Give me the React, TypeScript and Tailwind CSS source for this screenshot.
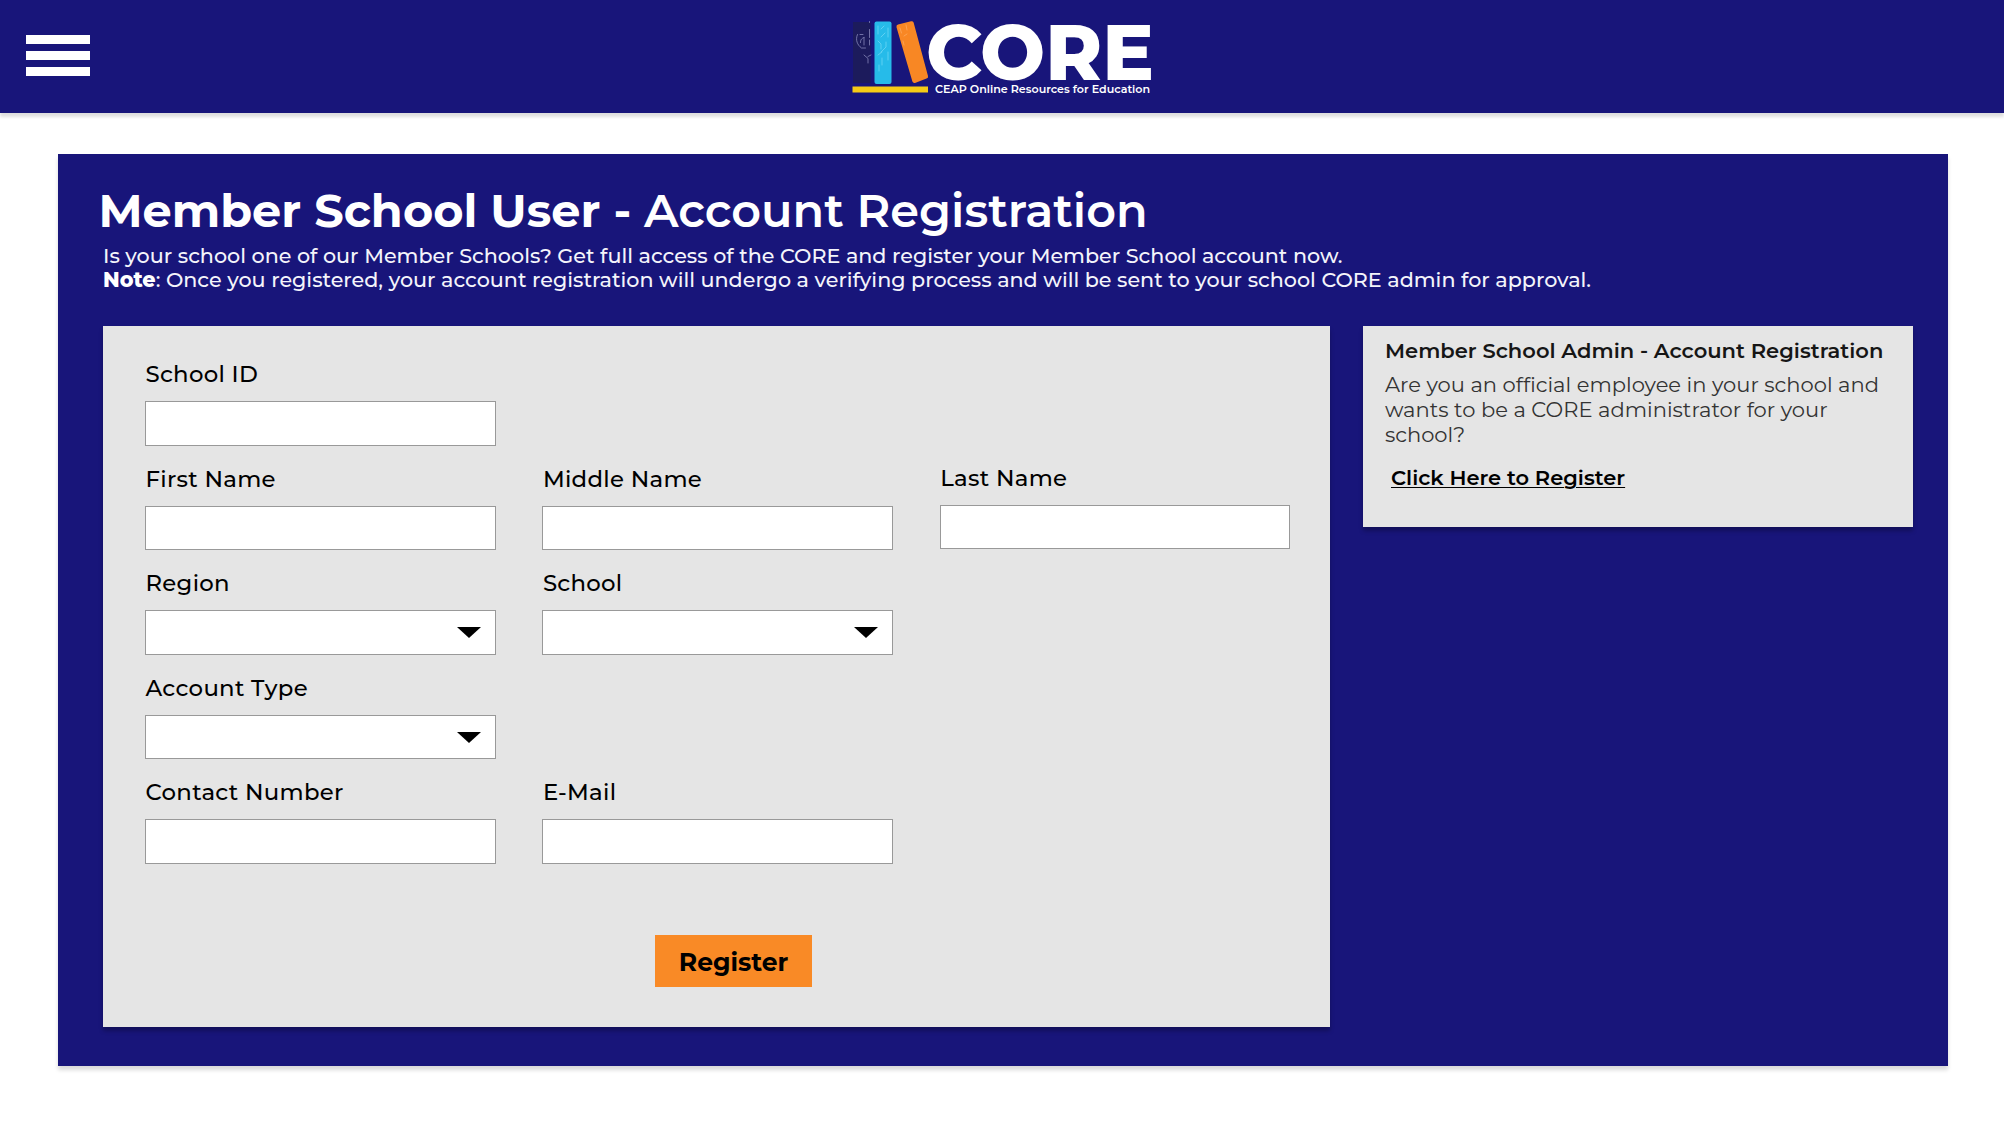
type FieldProps = {
  label: string;
  select?: boolean;
  className?: string;
};

function Field({ label, select = false, className = '' }: FieldProps) {
  return (
    <div className={`flex flex-col gap-[15px] ${className}`}>
      <label className="pt-px pl-[0.5px] text-[22.8px] leading-6 font-medium tracking-[0.3px] whitespace-nowrap text-black">
        {label}
      </label>
      <div className="flex h-[44.6px] items-center justify-end border border-[#999] bg-white pr-[14px]">
        {select && (
          <svg width="24" height="11" viewBox="0 0 24 11">
            <path d="M0 0h24L12 11z" fill="#000" />
          </svg>
        )}
      </div>
    </div>
  );
}

function BooksLogo() {
  return (
    <svg width="80" height="76" viewBox="0 0 80 76" fill="none">
      <rect x="1" y="2" width="17.5" height="61" fill="#1c1b5c" />
      <g stroke="#8d8fc0" strokeWidth="1" strokeLinecap="round" strokeLinejoin="round" opacity=".75">
        <path d="M5.500 14.500C3 20 5.500 25 9.500 28h4M8 14.500h3M12 17.500c-3 1-3.500 3-3.500 5M12 17.500V25M17.500 9.500v8M17.500 20v5M17.500 1.500v1M12 35l4 3.500V43M16 36.500l3-1.500" />
      </g>
      <rect x="22.500" y="1.500" width="17" height="62.500" rx="2" fill="#26bbe9" />
      <g stroke="#8fe3fa" strokeWidth="0.9" strokeLinecap="round" opacity=".6">
        <path d="M26 6v8M29 9l3-3M36 8v9M33 13l-4 4M26 21l3 3v5M34 22v5l-5 5M26 35l4-3M36 32v8M30 38v7M27 45v6" />
      </g>
      <path d="M46 4.500 59 1.200q2-.4 2.600 1.400L76 56q.500 2-1.500 2.600L63 63q-2 .4-2.600-1.400L44.500 7.200Q44 5.100 46 4.500z" fill="#f88724" />
      <g stroke="#ffb877" strokeWidth="0.9" strokeLinecap="round" opacity=".6">
        <path d="m48 8 1.500 5M54 5l1 5M52 16l3-2M51 21l1 4" />
      </g>
      <rect x="0.500" y="66.500" width="75.500" height="6" fill="#f5cb16" />
    </svg>
  );
}

function Header() {
  return (
    <header className="flex h-[112.6px] items-start bg-[#18157a] shadow-[0_4px_3px_rgba(0,0,0,0.13)]">
      <button aria-label="Menu" className="mt-[34.5px] ml-[26px] flex w-[63.5px] flex-col gap-[7.3px]">
        <span className="h-[9px] bg-white" />
        <span className="h-[9px] bg-white" />
        <span className="h-[9px] bg-white" />
      </button>
      <div className="mt-5 ml-[762.5px] flex">
        <BooksLogo />
        <div className="-ml-[6px] whitespace-nowrap text-white">
          <div className="mt-[5px] text-[77px] leading-[55px] font-extrabold">CORE</div>
          <div className="mt-px ml-[9px] text-[11.1px] leading-4 font-semibold">
            CEAP Online Resources for Education
          </div>
        </div>
      </div>
    </header>
  );
}

function RegistrationForm() {
  return (
    <form className="h-[701px] w-[1227px] bg-[#e5e5e5] pt-[35px] pl-[42px] shadow-[0_4px_4px_rgba(0,0,0,0.25)]">
      <div className="grid grid-cols-[350.6px_350.6px_350.6px] gap-x-[46.8px] gap-y-5">
        <Field label="School ID" className="col-span-3 w-[350.6px]" />
        <Field label="First Name" />
        <Field label="Middle Name" />
        <Field label="Last Name" className="-mt-px mb-px" />
        <Field label="Region" select />
        <Field label="School" select />
        <Field label="Account Type" select className="col-span-3 w-[350.6px]" />
        <Field label="Contact Number" />
        <Field label="E-Mail" />
      </div>
      <button
        type="button"
        className="mt-[71px] ml-[510px] flex h-[52px] w-[157px] items-center justify-center bg-[#f98a26] pt-px text-[25px] leading-8 font-bold text-black"
      >
        Register
      </button>
    </form>
  );
}

function AdminCard() {
  return (
    <aside className="h-[201px] w-[550px] bg-[#e5e5e5] pt-[11.5px] pl-[22px] whitespace-nowrap shadow-[0_4px_4px_rgba(0,0,0,0.25)]">
      <h2 className="text-[21.05px] leading-[26px] font-semibold text-[#161616]">
        Member School Admin - Account Registration
      </h2>
      <p className="mt-[8px] text-[21.05px] leading-[25px] text-[#333]">
        Are you an official employee in your school and
        <br />
        wants to be a CORE administrator for your
        <br />
        school?
      </p>
      <a
        href="#"
        className="mt-[18px] ml-[6px] block w-max text-[21px] leading-[26px] font-semibold text-black underline decoration-1 underline-offset-[2px]"
      >
        Click Here to Register
      </a>
    </aside>
  );
}

export default function App() {
  return (
    <div className="h-[1125px] w-[2004px] overflow-hidden bg-white font-['Montserrat','Inter',sans-serif]">
      <Header />
      <main className="mt-[41px] ml-[58.4px] h-[912.6px] w-[1889.6px] bg-[#18157a] pt-[33.6px] pl-[44.6px] shadow-[0_4px_4px_rgba(0,0,0,0.15)]">
        <h1 className="-ml-[4.5px] text-[46.2px] leading-[48px] font-semibold whitespace-nowrap text-white">
          <strong className="font-bold">Member School User -</strong> Account Registration
        </h1>
        <div className="mt-[8.4px] text-[20.7px] leading-[24.6px] font-medium whitespace-nowrap text-[#f4f4fb]">
          <p>
            Is your school one of our Member Schools? Get full access of the CORE and register your Member School
            account now.
          </p>
          <p>
            <strong className="font-extrabold text-white">Note</strong>: Once you registered, your account registration
            will undergo a verifying process and will be sent to your school CORE admin for approval.
          </p>
        </div>
        <div className="mt-[33.3px] flex items-start gap-[33px]">
          <RegistrationForm />
          <AdminCard />
        </div>
      </main>
    </div>
  );
}
